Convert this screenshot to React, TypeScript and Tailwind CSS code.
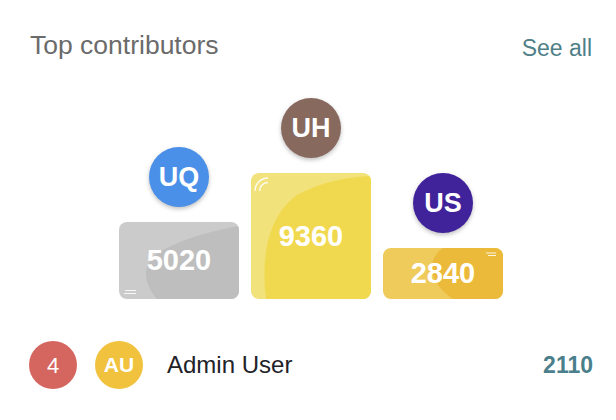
import React from "react";

type Podium = {
  initials: string;
  avatar: string;
  score: number;
  boxH: number;
  height: string;
  base: string;
  shade: string;
  shape: string;
  mark: React.ReactNode;
};

const podium: Podium[] = [
  {
    initials: "UQ",
    avatar: "bg-[#4a8fe8]",
    score: 5020,
    boxH: 77,
    height: "h-[77px]",
    base: "bg-[#cbcbcb]",
    shade: "#bebebe",
    shape: "M38 77 C22 58 22 38 48 26 C72 14 98 8 120 4 L120 77 Z",
    mark: (
      <g stroke="rgba(255,255,255,0.85)" strokeWidth="1">
        <line x1="6" y1="68.5" x2="17" y2="68.5" />
        <line x1="5" y1="71.5" x2="17" y2="71.5" />
      </g>
    ),
  },
  {
    initials: "UH",
    avatar: "bg-[#87695d]",
    score: 9360,
    boxH: 126,
    height: "h-[126px]",
    base: "bg-[#f1e27b]",
    shade: "#f1d94f",
    shape: "M15 126 C10 84 16 44 46 22 C72 8 98 4 120 3 L120 126 Z",
    mark: (
      <g stroke="rgba(255,255,255,0.9)" strokeWidth="1.5" fill="none">
        <path d="M4 18 A13 13 0 0 1 17 5" />
        <path d="M8.5 18 A8.5 8.5 0 0 1 17 9.5" />
      </g>
    ),
  },
  {
    initials: "US",
    avatar: "bg-[#40229b]",
    score: 2840,
    boxH: 51,
    height: "h-[51px]",
    base: "bg-[#efcb5c]",
    shade: "#ecba3a",
    shape: "M60 0 C44 10 44 34 70 51 L120 51 L120 0 Z",
    mark: (
      <g stroke="rgba(255,255,255,0.85)" strokeWidth="1">
        <line x1="103" y1="5" x2="113" y2="5" />
        <line x1="105" y1="7.5" x2="113" y2="7.5" />
      </g>
    ),
  },
];

// One podium column: avatar on top of a coloured block
const PodiumColumn = ({ item }: { item: Podium }) => (
  <div className="flex flex-col items-center">
    <div
      className={`w-[60px] h-[60px] rounded-full ${item.avatar} flex items-center justify-center text-white font-bold text-[27px] shadow-[0_2px_4px_rgba(0,0,0,0.25)] mb-[15px]`}
    >
      {item.initials}
    </div>
    <div
      className={`relative w-[120px] ${item.height} ${item.base} rounded-[8px] overflow-hidden flex items-center justify-center`}
    >
      <svg
        className="absolute inset-0"
        width="120"
        height={item.boxH}
        viewBox={`0 0 120 ${item.boxH}`}
      >
        <path d={item.shape} fill={item.shade} />
        {item.mark}
      </svg>
      <span className="relative text-white font-bold text-[29px] leading-none">
        {item.score}
      </span>
    </div>
  </div>
);

export default function App() {
  return (
    <div className="w-[616px] h-[420px] bg-white font-['Liberation_Sans',Arial,sans-serif] overflow-hidden">
      {/* Header */}
      <div className="flex justify-between items-start pl-[30px] pr-[24px] pt-[30px]">
        <h2 className="text-[26.5px] leading-[30px] text-[#6b6b6b]">
          Top contributors
        </h2>
        <a className="text-[23px] leading-[26px] mt-[5px] text-[#4f7f88]">
          See all
        </a>
      </div>

      {/* Podium */}
      <div className="flex items-end justify-center gap-3 pl-[30px] pr-[24px] mt-[37px]">
        {podium.map((item) => (
          <PodiumColumn key={item.initials} item={item} />
        ))}
      </div>

      {/* Rank list */}
      <div className="flex items-center pl-[29px] pr-[23px] mt-[42px]">
        <div className="w-[48px] h-[48px] rounded-full bg-[#d5665f] flex items-center justify-center text-white text-[22px]">
          4
        </div>
        <div className="w-[48px] h-[48px] rounded-full bg-[#f1c23e] flex items-center justify-center text-white font-bold text-[21px] ml-[18px]">
          AU
        </div>
        <span className="ml-[24px] text-[24px] text-[#222228]">Admin User</span>
        <span className="ml-auto text-[23px] font-bold text-[#4b7f8c]">2110</span>
      </div>
    </div>
  );
}
